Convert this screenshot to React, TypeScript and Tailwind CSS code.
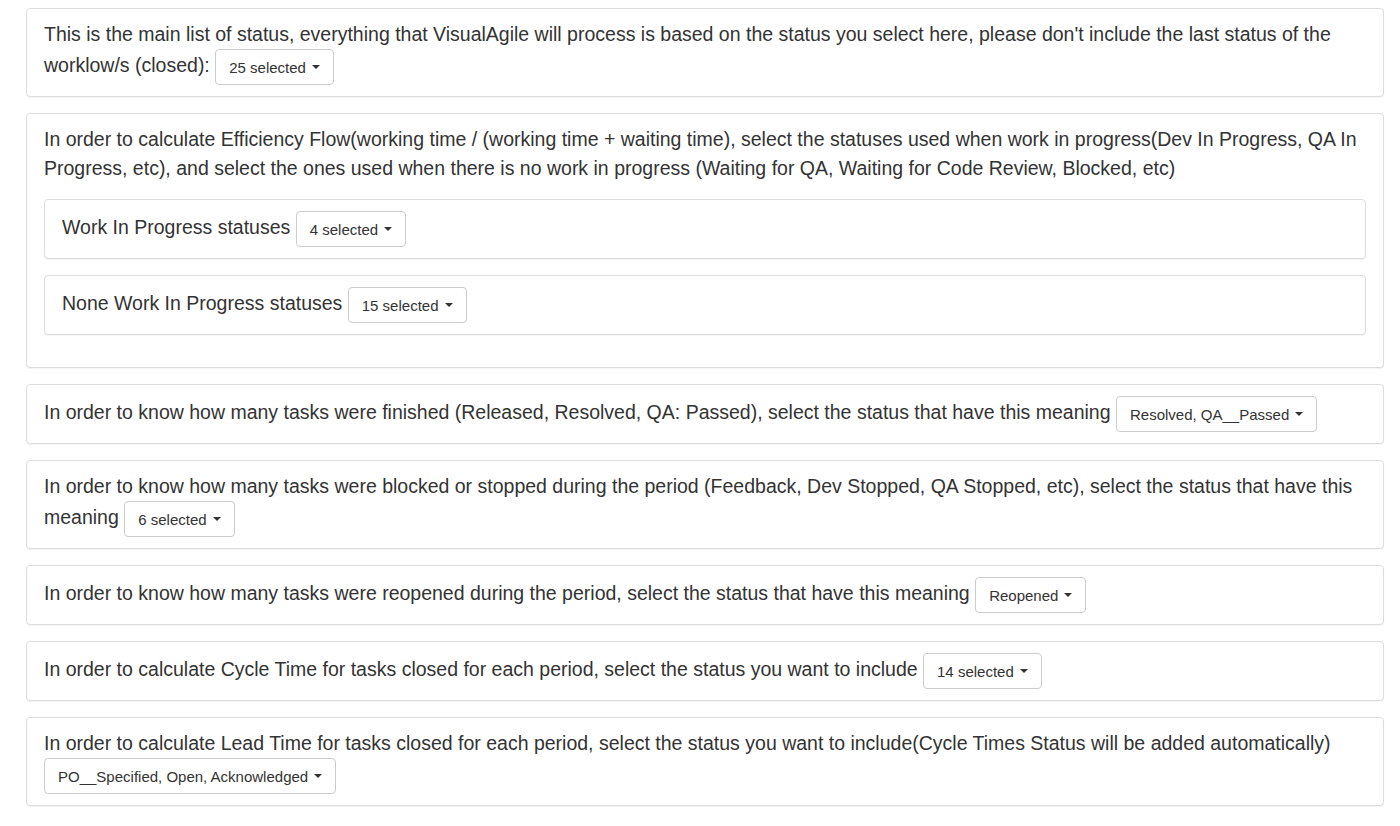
import React from 'react';

const Dropdown: React.FC<{ label: string }> = ({ label }) => (
  <button className="inline-flex items-center align-middle h-[36px] px-[13px] bg-white border border-[#ccc] rounded-[4px] text-[15px] leading-none text-[#333] whitespace-nowrap">
    {label}
    <span className="ml-[6px] inline-block w-0 h-0 border-l-[4px] border-r-[4px] border-t-[4px] border-l-transparent border-r-transparent border-t-[#333]"></span>
  </button>
);

const Panel: React.FC<{ children: React.ReactNode; className?: string }> = ({ children, className = '' }) => (
  <div className={`bg-white border border-[#ddd] rounded-[4px] shadow-[0_1px_1px_rgba(0,0,0,0.05)] px-[17px] py-[11px] ${className}`}>
    {children}
  </div>
);

const App: React.FC = () => {
  return (
    <div className="min-h-screen bg-white px-[26px] pt-[8px] pb-[20px] text-[#333] font-['Liberation_Sans',Arial,sans-serif] text-[19.5px] leading-[29px] flex flex-col gap-[16px] w-[1410px]">
      <Panel>
        This is the main list of status, everything that VisualAgile will process is based on the status you select here, please don't include the last status of the worklow/s (closed): <Dropdown label="25 selected" />
      </Panel>

      <Panel>
        <p>
          In order to calculate Efficiency Flow(working time / (working time + waiting time), select the statuses used when work in progress(Dev In Progress, QA In Progress, etc), and select the ones used when there is no work in progress (Waiting for QA, Waiting for Code Review, Blocked, etc)
        </p>
        <div className="flex flex-col gap-[16px] mt-[16px] mb-[21px]">
          <Panel>
            Work In Progress statuses <Dropdown label="4 selected" />
          </Panel>
          <Panel>
            None Work In Progress statuses <Dropdown label="15 selected" />
          </Panel>
        </div>
      </Panel>

      <Panel>
        In order to know how many tasks were finished (Released, Resolved, QA: Passed), select the status that have this meaning <Dropdown label="Resolved, QA__Passed" />
      </Panel>

      <Panel>
        In order to know how many tasks were blocked or stopped during the period (Feedback, Dev Stopped, QA Stopped, etc), select the status that have this meaning <Dropdown label="6 selected" />
      </Panel>

      <Panel>
        In order to know how many tasks were reopened during the period, select the status that have this meaning <Dropdown label="Reopened" />
      </Panel>

      <Panel>
        In order to calculate Cycle Time for tasks closed for each period, select the status you want to include <Dropdown label="14 selected" />
      </Panel>

      <Panel>
        In order to calculate Lead Time for tasks closed for each period, select the status you want to include(Cycle Times Status will be added automatically) <Dropdown label="PO__Specified, Open, Acknowledged" />
      </Panel>
    </div>
  );
};

export default App;
